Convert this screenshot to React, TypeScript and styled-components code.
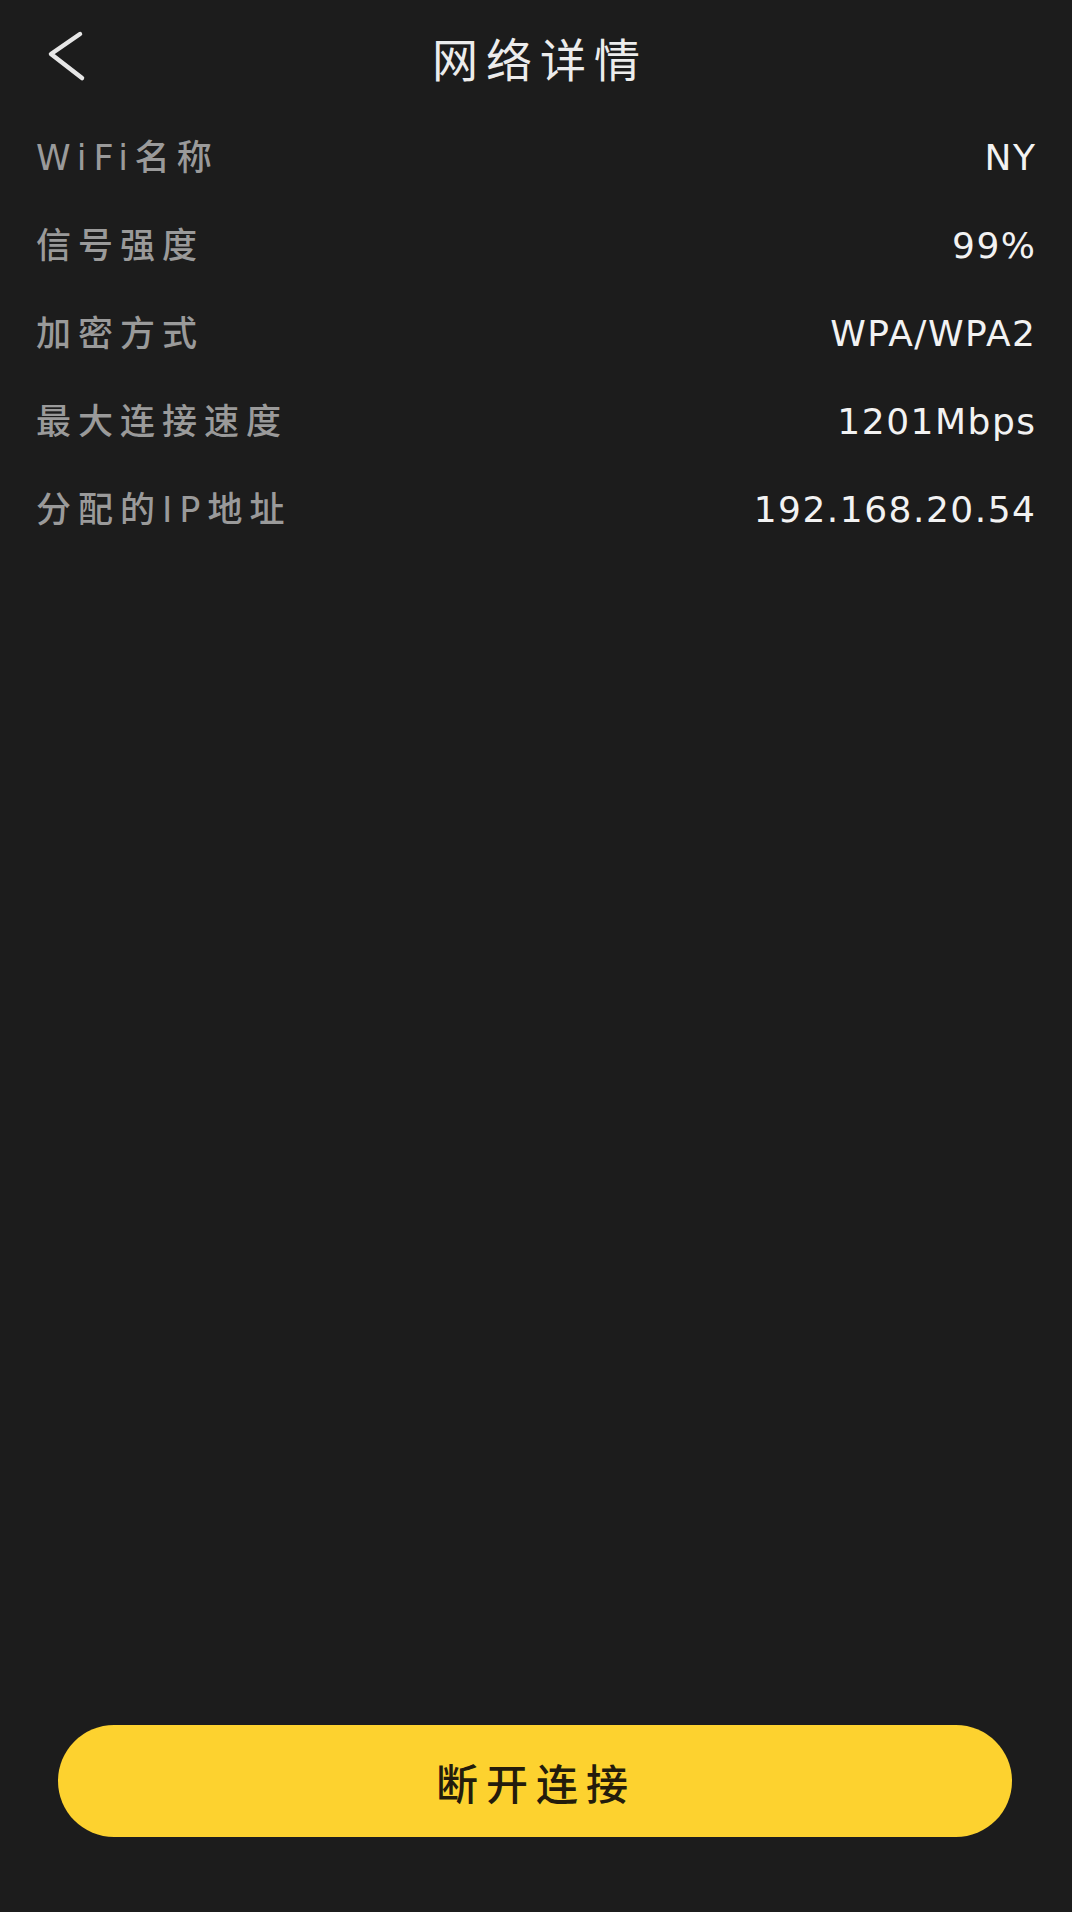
import React from "react";
import styled, { createGlobalStyle } from "styled-components";

const GlobalStyle = createGlobalStyle`
  html, body {
    margin: 0;
    padding: 0;
    background: #1c1c1c;
  }
  #root {
    min-height: 100vh;
  }
`;

const DETAILS = [
  { label: "WiFi名称", value: "NY" },
  { label: "信号强度", value: "99%" },
  { label: "加密方式", value: "WPA/WPA2" },
  { label: "最大连接速度", value: "1201Mbps" },
  { label: "分配的IP地址", value: "192.168.20.54" },
];

const Page = styled.div`
  display: flex;
  flex-direction: column;
  min-height: 100vh;
  background: #1c1c1c;
  font-family: "DejaVu Sans", "Noto Sans CJK SC", sans-serif;
`;

const Header = styled.header`
  display: grid;
  grid-template-columns: 1fr auto 1fr;
  align-items: center;
  height: 114px;
  padding: 0 46px;
`;

const BackButton = styled.button`
  display: flex;
  align-items: center;
  justify-self: start;
  padding: 0;
  border: none;
  background: transparent;
  cursor: pointer;
`;

const Title = styled.h1`
  margin: 0;
  color: #ececec;
  font-family: "Noto Sans CJK SC", sans-serif;
  font-size: 46px;
  font-weight: 400;
  letter-spacing: 8px;
  line-height: 1;
  padding-left: 8px;
`;

const List = styled.div`
  display: flex;
  flex-direction: column;
  padding: 0 37px 0 36px;
`;

const Row = styled.div`
  display: flex;
  align-items: center;
  justify-content: space-between;
  height: 88px;
`;

const Label = styled.span`
  color: #9a9a9a;
  font-family: "DejaVu Sans", "Noto Sans CJK SC", sans-serif;
  font-size: 35px;
  font-weight: 500;
  letter-spacing: 7px;
  line-height: 1;
`;

const Value = styled.span`
  color: #f2f2f2;
  font-family: "DejaVu Sans", sans-serif;
  font-size: 36px;
  letter-spacing: 1.5px;
  line-height: 1;
  margin-right: -1.5px;
`;

const Spacer = styled.div`
  flex: 1;
`;

const DisconnectButton = styled.button`
  display: flex;
  align-items: center;
  justify-content: center;
  height: 112px;
  margin: 0 60px 75px 58px;
  border: none;
  border-radius: 56px;
  background: #fdd22f;
  color: #241c0c;
  font-family: "Noto Sans CJK SC", sans-serif;
  font-size: 42px;
  font-weight: 500;
  letter-spacing: 8px;
  padding-left: 8px;
  cursor: pointer;
`;

const BackIcon = () => (
  <svg width="40" height="54" viewBox="0 0 40 54" fill="none">
    <polyline
      points="34,4 5,24 36,48"
      stroke="#e6e6e6"
      strokeWidth="4.5"
      strokeLinecap="round"
      strokeLinejoin="round"
    />
  </svg>
);

export default function App() {
  return (
    <Page>
      <GlobalStyle />
      <Header>
        <BackButton aria-label="返回">
          <BackIcon />
        </BackButton>
        <Title>网络详情</Title>
        <div />
      </Header>
      <List>
        {DETAILS.map((item) => (
          <Row key={item.label}>
            <Label>{item.label}</Label>
            <Value>{item.value}</Value>
          </Row>
        ))}
      </List>
      <Spacer />
      <DisconnectButton>断开连接</DisconnectButton>
    </Page>
  );
}
